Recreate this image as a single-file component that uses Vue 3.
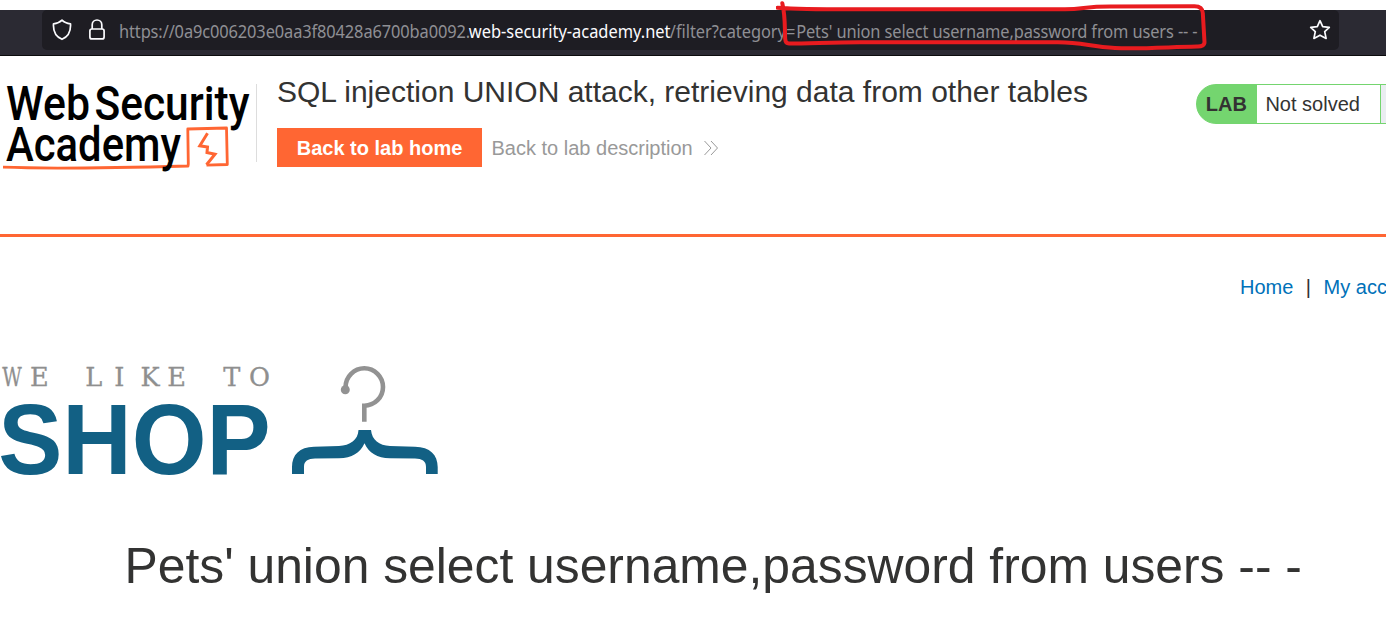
<script setup>
const url = {
  start: 'https://0a9c006203e0aa3f80428a6700ba0092.',
  domain: 'web-security-academy.net',
  path: '/filter?category=',
  query: "Pets' union select username,password from users -- -",
}
</script>

<template>
  <main class="page">
    <div class="browser">
      <div class="address">
        <svg class="shield" width="20" height="22" viewBox="0 0 20 22">
          <path d="M10 1.2 C8 3.3 4.5 4.5 1.5 4.8 C1.1 11 3.2 17.4 10 20.3 C16.8 17.4 18.9 11 18.5 4.8 C15.5 4.5 12 3.3 10 1.2Z" />
        </svg>
        <svg class="lock" width="18" height="22" viewBox="0 0 18 22">
          <rect x="1.9" y="10" width="14.2" height="9.9" rx="2" />
          <path d="M4.2 10V5.8a4.8 4.8 0 0 1 9.6 0V10" />
        </svg>
        <div class="url"><span class="u1">{{ url.start }}</span><span class="u2">{{ url.domain }}</span><span class="u3">{{ url.path }}</span><span class="u4">{{ url.query }}</span></div>
        <svg class="star" width="22" height="22" viewBox="0 0 22 22">
          <path d="M11 1.7 L13.7 7.6 L20.3 8.3 L15.7 12.6 L17.1 19.4 L11 16.2 L4.9 19.4 L6.3 12.6 L1.7 8.3 L8.3 7.6Z" />
        </svg>
      </div>
      <svg class="marker" width="440" height="56" viewBox="776 0 440 56">
        <path d="M777.5 7.7 C800 9.3 820 9.3 850 9.3 H1065 C1085 8.8 1085 6.5 1110 6.5 L1194 6.2 Q1202.5 6 1202.8 13 L1204.5 42 Q1204.5 46.8 1197 46.5 C1160 47.5 1138 49 1115 48 C1090 46.8 1083 42.3 1058 42.3 H860 C830 42.5 808 43.5 789 43.5 Q785.4 43.5 785.2 39 C784.6 29 785.6 17 782.3 3.2" />
      </svg>
    </div>

    <header class="lab">
      <svg class="logo" width="257" height="94" viewBox="0 0 257 94">
        <g class="wordmark">
          <text x="6" y="42" textLength="84" lengthAdjust="spacingAndGlyphs">Web</text>
          <text x="94.5" y="42" textLength="155" lengthAdjust="spacingAndGlyphs">Security</text>
        </g>
        <path class="line" d="M3 89.2 C50 91 130 89.5 188 88 L188.3 86 L187.8 51 L226.5 50 L227.3 86.5 L206.5 87.2" />
        <path class="bolt" d="M207.5 55.3 L199.8 67.8 L207.5 69 L207 74.5 L215 76.2 L206.5 86.8" />
        <text class="word" x="6" y="82.7" textLength="175" lengthAdjust="spacingAndGlyphs">Academy</text>
        <path class="divider" d="M256.5 6 V84" />
      </svg>
      <div class="lab-info">
        <h2>SQL injection UNION attack, retrieving data from other tables</h2>
        <div class="actions">
          <a class="button">Back to lab home</a>
          <a class="description">Back to lab description</a>
          <svg width="16" height="16" viewBox="0 0 16 16"><path d="M1.5 1 L8 8 L1.5 15 M8 1 L14.5 8 L8 15" /></svg>
        </div>
      </div>
      <div class="status"><b>LAB</b><span>Not solved</span><i></i></div>
    </header>

    <nav><a>Home</a><span>|</span><a>My account</a></nav>

    <svg class="shop" width="450" height="130" viewBox="0 356 450 130">
      <text class="tagline" y="385.8" x="2.3 30 58 85.3 114.3 140.5 167.3 196 223.3 249"><tspan textLength="19.5" lengthAdjust="spacingAndGlyphs">W</tspan>E LIKE TO</text>
      <text class="brand" x="-1.8" y="474.4" textLength="272.5" lengthAdjust="spacingAndGlyphs">SHOP</text>
      <path class="hook" d="M345.6 388 V387 A18.7 18.7 0 0 1 383 387 A18.7 18.7 0 0 1 364.3 405.7 V421.8" />
      <circle cx="345.3" cy="389.7" r="4.5" />
      <path class="hanger" d="M358.5 430 H371 C372 440 379 445.5 390 446 L415 446.8 C430 447 437.7 455 437.7 467 V474 H426 V467 C426 461 422 458.8 415 458.6 L390 458.2 C377 458 369 453 364.5 443.2 C360 453 352 458 339 458.2 L315 458.6 C308 458.8 304 461 304 467 V474 H292 V467 C292 455 299.5 447 314 446.8 L339 446 C350 445.5 358 440 358.5 430Z" />
    </svg>

    <h1>{{ url.query }}</h1>
  </main>
</template>

<style>
body { background: #fff; overflow: hidden; }
</style>

<style scoped>
.page {
  width: 1386px;
  height: 623px;
  overflow: hidden;
  color: #333332;
  font-family: "Liberation Sans", Arial, sans-serif;
}
.page * { box-sizing: border-box; }
.browser {
  position: relative;
  height: 46px;
  margin-top: 10px;
  padding: 0 47px 0 42px;
  background: #2b2a33;
  border-bottom: 1px solid #0c0c0d;
}
.address {
  display: flex;
  align-items: center;
  height: 40px;
  padding: 0 8px 0 10px;
  background: #1e1d23;
  border-radius: 5px;
}
.address svg { fill: none; stroke: #fbfbfe; stroke-width: 1.7; stroke-linejoin: round; flex: none; }
.lock { margin-left: 16px; }
.url {
  flex: 1;
  min-width: 0;
  display: flex;
  margin-left: 13px;
  padding-top: 2px;
  white-space: pre;
  color: #8f8f94;
  font: 18px/24px "Noto Sans", "Open Sans", sans-serif;
  transform: scaleX(.912);
  transform-origin: 0 0;
}
.url span { display: block; flex: none; }
.u1 { width: 383.5px; letter-spacing: -.13px; }
.u2 { width: 220.5px; color: #fbfbfe; }
.u3 { width: 138.5px; letter-spacing: -.05px; }
.u4 { letter-spacing: -.13px; }
.marker { position: absolute; left: 776px; top: -10px; fill: none; stroke: #e81b1f; stroke-width: 4; stroke-linecap: round; stroke-linejoin: round; }
.lab {
  display: flex;
  height: 181px;
  padding-top: 22px;
  border-bottom: 3px solid #ff6633;
}
.logo { flex: none; overflow: visible; }
.logo text { fill: #000; font: 500 48px Roboto, sans-serif; }
.line { fill: none; stroke: #ff6633; stroke-width: 2.8; stroke-linejoin: round; }
.bolt { fill: none; stroke: #ff6633; stroke-width: 3; stroke-linejoin: miter; }
.divider { stroke: #ddd; }
.lab-info { flex: none; margin-left: 20px; }
h2 { margin: -3px 0 0; font-size: 30px; line-height: 34px; font-weight: 400; white-space: nowrap; }
.actions { display: flex; align-items: center; height: 39px; margin-top: 19px; font-size: 20px; }
.button { width: 205px; height: 39px; line-height: 40px; text-align: center; color: #fff; background: #ff6633; font-weight: 700; }
.description { margin: 0 10px 0 9.5px; line-height: 24px; padding-top: 1px; color: #999; white-space: nowrap; }
.actions svg { fill: none; stroke: #999; stroke-width: 1; }
.status {
  display: flex;
  flex: none;
  width: 205px;
  height: 40px;
  margin: 6px 0 0 108px;
  border: 1px solid #74d56f;
  border-radius: 20px 0 0 20px;
  background: linear-gradient(90deg, #74d56f 60px, #fff 60px);
  overflow: hidden;
  font-size: 20px;
  line-height: 39px;
}
.status b { width: 60px; padding-right: 1px; text-align: center; }
.status span { width: 123px; padding-left: 8.5px; }
.status i { flex: 1; background: #eaedf1; border-left: 1px solid #74d56f; }
nav { display: flex; justify-content: flex-start; margin: 38px 0 0 1240px; font-size: 20px; line-height: 24px; white-space: nowrap; color: #333; }
nav a { color: #0071b9; }
nav span { margin: 0 12.5px; }
.shop { display: block; margin-top: 57px; overflow: visible; }
.tagline { fill: #8f8f8f; stroke: #8f8f8f; stroke-width: .3; font: 25.6px "DejaVu Serif", serif; white-space: pre; }
.brand { fill: #126084; font: 700 101px "Liberation Sans", Arial, sans-serif; }
.hook { fill: none; stroke: #929292; stroke-width: 4.6; }
.shop circle { fill: #929292; }
.hanger { fill: #126084; }
h1 { margin: 52px 0 0 124.5px; font-size: 49.8px; line-height: 56px; font-weight: 400; white-space: nowrap; }
</style>
